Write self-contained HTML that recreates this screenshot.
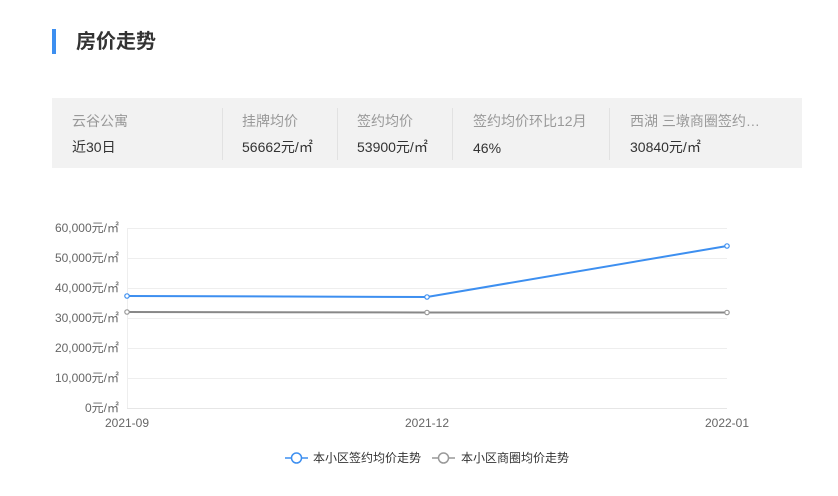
<!DOCTYPE html>
<html><head><meta charset="utf-8"><style>
body{margin:0;width:838px;height:496px;background:#fff;font-family:"Liberation Sans","Noto Sans CJK SC",sans-serif;position:relative;overflow:hidden}
.bar{position:absolute;left:52px;top:29px;width:4px;height:25px;background:#3d8ff0}
.title{position:absolute;left:76px;top:29px;font-size:20px;font-weight:bold;color:#333;line-height:26px}
.info{position:absolute;left:52px;top:98px;width:750px;height:70px;background:#f2f2f2}
.l{position:absolute;top:14px;font-size:14px;color:#999;white-space:nowrap;line-height:18px}
.v{position:absolute;top:40px;font-size:14px;color:#333;white-space:nowrap;line-height:18px;height:18px}
.sep{position:absolute;top:10px;width:1px;height:52px;background:#e2e2e2}
</style></head><body>
<div class="bar"></div><div class="title">房价走势</div>
<div class="info">
<div class="l" style="left:20px">云谷公寓</div><div class="v" style="left:20px">近30日</div>
<div class="sep" style="left:170px"></div>
<div class="l" style="left:190px">挂牌均价</div><div class="v" style="left:190px">56662元/㎡</div>
<div class="sep" style="left:285px"></div>
<div class="l" style="left:305px">签约均价</div><div class="v" style="left:305px">53900元/㎡</div>
<div class="sep" style="left:400px"></div>
<div class="l" style="left:421px">签约均价环比12月</div><div class="v" style="left:421px;top:41px">46%</div>
<div class="sep" style="left:557px"></div>
<div class="l" style="left:578px">西湖 三墩商圈签约…</div><div class="v" style="left:578px">30840元/㎡</div>
</div>
<svg width="838" height="496" style="position:absolute;left:0;top:0" font-family="Liberation Sans, Noto Sans CJK SC, sans-serif" font-size="12" fill="#666">
<g stroke="#eee" stroke-width="1">
<line x1="127" y1="228.5" x2="727" y2="228.5"/><line x1="127" y1="258.5" x2="727" y2="258.5"/><line x1="127" y1="288.5" x2="727" y2="288.5"/><line x1="127" y1="318.5" x2="727" y2="318.5"/><line x1="127" y1="348.5" x2="727" y2="348.5"/><line x1="127" y1="378.5" x2="727" y2="378.5"/>
<line x1="127.5" y1="228" x2="127.5" y2="408"/>
</g>
<line x1="127" y1="408.5" x2="727" y2="408.5" stroke="#e6e6e6"/>
<g text-anchor="end">
<text x="119" y="232">60,000元/㎡</text><text x="119" y="262">50,000元/㎡</text><text x="119" y="292">40,000元/㎡</text><text x="119" y="322">30,000元/㎡</text><text x="119" y="352">20,000元/㎡</text><text x="119" y="382">10,000元/㎡</text><text x="119" y="412">0元/㎡</text>
</g>
<g text-anchor="middle"><text x="127" y="427">2021-09</text><text x="427" y="427">2021-12</text><text x="727" y="427">2022-01</text></g>
<polyline points="127,312 427,312.5 727,312.5" fill="none" stroke="#888" stroke-width="2"/>
<polyline points="127,296 427,297 727,246" fill="none" stroke="#3d8ff0" stroke-width="2"/>
<g fill="#fff" stroke="#999" stroke-width="1.2"><circle cx="127" cy="312" r="2.2"/><circle cx="427" cy="312.5" r="2.2"/><circle cx="727" cy="312.5" r="2.2"/></g>
<g fill="#fff" stroke="#3d8ff0" stroke-width="1.2"><circle cx="127" cy="296" r="2.2"/><circle cx="427" cy="297" r="2.2"/><circle cx="727" cy="246" r="2.2"/></g>
<line x1="285" y1="458" x2="308" y2="458" stroke="#3d8ff0" stroke-width="1.5"/><circle cx="296.5" cy="458" r="5" fill="#fff" stroke="#3d8ff0" stroke-width="1.5"/>
<text x="313" y="462" fill="#333">本小区签约均价走势</text>
<line x1="432" y1="458" x2="455" y2="458" stroke="#999" stroke-width="1.5"/><circle cx="443.5" cy="458" r="5" fill="#fff" stroke="#999" stroke-width="1.5"/>
<text x="461" y="462" fill="#333">本小区商圈均价走势</text>
</svg>
</body></html>
